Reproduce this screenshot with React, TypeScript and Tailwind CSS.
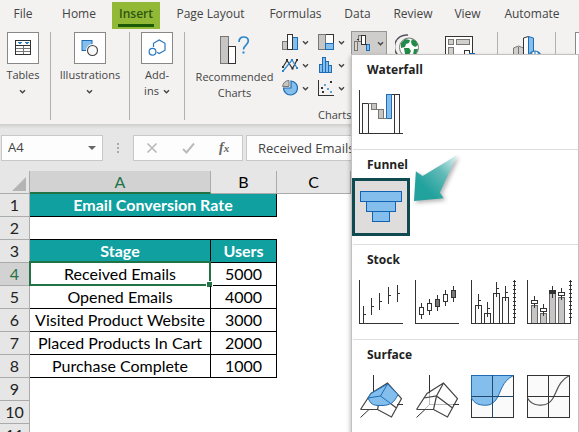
import type { ReactNode } from "react";

const tabs = [
  { name: "File", width: "w-[46px]" },
  { name: "Home", width: "w-[66px]" },
  { name: "Insert", width: "w-12" },
  { name: "Page Layout", width: "w-[101px]" },
  { name: "Formulas", width: "w-[69px]" },
  { name: "Data", width: "w-[55px]" },
  { name: "Review", width: "w-14" },
  { name: "View", width: "w-[53px]" },
  { name: "Automate", width: "w-[76px]" },
];

const stages = [
  ["Received Emails", "5000"],
  ["Opened Emails", "4000"],
  ["Visited Product Website", "3000"],
  ["Placed Products In Cart", "2000"],
  ["Purchase Complete", "1000"],
];

function Chevron() {
  return (
    <svg className="size-[7px] shrink-0" viewBox="0 0 7 7" fill="none" stroke="#444" strokeWidth="1.4" aria-hidden="true">
      <path d="M1 2.2 3.5 4.7 6 2.2" />
    </svg>
  );
}

function RibbonGroup({ width, children }: { width: string; children: ReactNode }) {
  return <div className={`h-[88px] shrink-0 border-r border-[#b3b0ad] ${width}`}>{children}</div>;
}

function LargeButton({ icon, lines, inlineArrow }: { icon: ReactNode; lines: string[]; inlineArrow?: boolean }) {
  return (
    <button type="button" className="flex w-full flex-col items-center">
      <span className="flex size-8 items-center justify-center border border-[#8a8886] bg-white">{icon}</span>
      <span className="mt-[3px] flex flex-col items-center leading-4">
        {lines.map((line, i) => (
          <span key={line} className="flex items-center gap-1">
            {line}
            {inlineArrow && i === lines.length - 1 && <Chevron />}
          </span>
        ))}
        {!inlineArrow && (
          <span className="flex h-4 items-center">
            <Chevron />
          </span>
        )}
      </span>
    </button>
  );
}

function TablesIcon() {
  return (
    <svg className="size-4" viewBox="0 0 16 16" fill="none" shapeRendering="crispEdges" aria-hidden="true">
      <path d="M1 8.5h14M1 11.5h14M8 6v9" stroke="#777" />
      <rect x="0.5" y="0.5" width="15" height="14" stroke="#333" />
      <path d="M1 5.5h14" stroke="#333" />
      <path d="M2 2h5L4.500 4.500zM9 2h5l-2.500 2.500z" fill="#2b7cc0" />
    </svg>
  );
}

function ShapesIcon() {
  return (
    <svg className="h-[18px] w-[18px]" viewBox="0 0 18 18" aria-hidden="true">
      <rect x="1" y="1.500" width="10" height="10" fill="#83beec" stroke="#1e6cb3" />
      <circle cx="11.500" cy="11.500" r="6.500" fill="#fff" />
      <circle cx="11.500" cy="11.500" r="5" fill="#fafafa" stroke="#444" strokeWidth="1.100" />
    </svg>
  );
}

function AddInsIcon() {
  return (
    <svg className="h-[18px] w-[18px]" viewBox="0 0 18 18" fill="none" stroke="#2a78bd" strokeWidth="1.200" aria-hidden="true">
      <path d="M5.500 8V4.300L11.200 1l5.800 3.300v6.900l-5.800 3.300-2.200-1.200" />
      <circle cx="4.500" cy="12.800" r="3.400" />
    </svg>
  );
}

function RecommendedIcon() {
  return (
    <svg className="h-7 w-[30px]" viewBox="0 0 30 28" aria-hidden="true">
      <g shapeRendering="crispEdges">
        <rect x="0.500" y="0.500" width="8" height="27" fill="#c8c6c4" stroke="#797774" />
        <rect x="8.500" y="10.500" width="7" height="17" fill="#fff" stroke="#333" />
      </g>
      <path d="M19 6c0-3.200 1.700-5 4.700-5s4.600 1.600 4.600 4.100c0 4-4.800 4-4.800 8.400" fill="none" stroke="#2a87cc" strokeWidth="1.700" />
      <rect x="22.500" y="15.500" width="2" height="2" fill="#2a87cc" />
    </svg>
  );
}

const chartIcons: { label: string; art: ReactNode }[] = [
  {
    label: "Insert Column or Bar Chart",
    art: (
      <g shapeRendering="crispEdges">
        <rect x="0.500" y="7.500" width="5" height="8" fill="#c8c6c4" stroke="#797774" />
        <rect x="10.500" y="3.500" width="5" height="12" fill="#83beec" stroke="#1e6cb3" />
        <rect x="5.500" y="0.500" width="5" height="15" fill="#fff" stroke="#333" />
      </g>
    ),
  },
  {
    label: "Insert Hierarchy Chart",
    art: (
      <g shapeRendering="crispEdges">
        <rect x="7.500" y="0.500" width="8" height="9" fill="#fff" stroke="#333" />
        <rect x="0.500" y="0.500" width="7" height="15" fill="#c8c6c4" stroke="#797774" />
        <rect x="7.500" y="9.500" width="8" height="6" fill="#83beec" stroke="#1e6cb3" />
      </g>
    ),
  },
  {
    label: "Insert Line or Area Chart",
    art: (
      <g fill="none" strokeWidth="1.200">
        <path d="M1 10 5 3.500 10.500 11.500 15 3" stroke="#333" />
        <path d="M1 14 10 3 15 11" stroke="#2a87cc" />
        <path d="M0 9h2v2H0zM4 2h2v2H4zM9.500 10.500h2v2h-2zM14 2h2v2h-2z" fill="#333" />
        <path d="M0 13h2v2H0zM9 2h2v2H9zM14 10h2v2h-2z" fill="#2a87cc" />
      </g>
    ),
  },
  {
    label: "Insert Statistic Chart",
    art: (
      <g fill="#83beec" stroke="#1e6cb3" shapeRendering="crispEdges">
        <rect x="1.500" y="7.500" width="3" height="8" />
        <rect x="4.500" y="0.500" width="3" height="15" />
        <rect x="7.500" y="4.500" width="3" height="11" />
        <rect x="10.500" y="8.500" width="3" height="7" />
      </g>
    ),
  },
  {
    label: "Insert Pie or Doughnut Chart",
    art: (
      <g>
        <path d="M9 1a7 7 0 1 1-7.500 7H9z" fill="#83beec" stroke="#1e6cb3" strokeWidth="1.200" />
        <path d="M7 6.500H.6A6.300 6.300 0 0 1 7 .5z" fill="#c8c6c4" stroke="#797774" />
      </g>
    ),
  },
  {
    label: "Insert Scatter or Bubble Chart",
    art: (
      <g shapeRendering="crispEdges">
        <path d="M0.500 0v15.500H16" fill="none" stroke="#333" />
        <path d="M3 7h2v2H3zM12 1h2v2h-2zM4 11h2v2H4z" fill="#333" />
        <path d="M6 4h2v2H6zM9 8h2v2H9zM12 11h2v2h-2z" fill="#5ba5dc" />
      </g>
    ),
  },
];

function GlobeIcon() {
  return (
    <svg className="size-7" viewBox="0 0 28 28" aria-hidden="true">
      <path d="M13 1A12 12 0 0 0 5 23" fill="none" stroke="#54515c" strokeWidth="1.500" />
      <circle cx="14" cy="13.500" r="9.500" fill="#fff" stroke="#777" />
      <path d="M6 9l4-4 5 1-1 3-3 1-1 3-4 1zM17 5l4 2 2 4-3 2-3-2-1-3zM9 14l5 0 2 3-3 6-3-3zM19 15l4 0-2 5-3 1z" fill="#238a4a" />
    </svg>
  );
}

function PivotChartIcon() {
  return (
    <svg className="h-7 w-[30px]" viewBox="0 0 30 28" shapeRendering="crispEdges" aria-hidden="true">
      <rect x="0.500" y="0.500" width="27" height="27" fill="#fff" stroke="#333" />
      <rect x="3.500" y="3.500" width="5" height="5" fill="#d2d0ce" stroke="#797774" />
      <rect x="11.500" y="3.500" width="13" height="5" fill="#d2d0ce" stroke="#797774" />
      <rect x="3.500" y="11.500" width="5" height="13" fill="#d2d0ce" stroke="#797774" />
      <rect x="19.500" y="14.500" width="5" height="13" fill="#fff" stroke="#333" />
      <path d="M24.500 17.500h5v10h-5z" fill="#83beec" stroke="#1e6cb3" />
    </svg>
  );
}

function MapIcon() {
  return (
    <svg className="h-7 w-7" viewBox="0 0 28 28" aria-hidden="true">
      <path d="M.5 28V12l5-2 5 2v16" fill="#d2d0ce" stroke="#797774" />
      <path d="M5.500 11v17" stroke="#797774" />
      <path d="M10.500 28V2l5-1.500V28" fill="#fff" stroke="#333" />
      <path d="M15.500 28V.5l5 1.500v26z" fill="#83beec" stroke="#1e6cb3" />
      <circle cx="22" cy="21" r="6" fill="#fff" stroke="#2a78bd" strokeWidth="1.200" />
      <path d="M16 20h12M22 15v12M19 16c-1 4-1 7 0 10M25 16c1 4 1 7 0 10" fill="none" stroke="#2a78bd" />
    </svg>
  );
}

function WaterfallButtonIcon() {
  return (
    <svg className="h-[17px] w-[17px]" viewBox="0 0 17 17" shapeRendering="crispEdges" aria-hidden="true">
      <g fill="#d8d6d4" stroke="#797774">
        <rect x="0.500" y="6.500" width="3" height="9" />
        <rect x="4.500" y="0.500" width="3" height="6" />
      </g>
      <path d="M7.500 9.500v-9h4v9z" fill="#fff" stroke="#333" />
      <rect x="12.500" y="9.500" width="3" height="6" fill="#83beec" stroke="#1e6cb3" />
      <path d="M3 4.500h2M11 9.500h2" stroke="#333" />
    </svg>
  );
}

const ink = "#333";
const axes = <path d="M0.500 0v43.500H44" fill="none" stroke={ink} shapeRendering="crispEdges" />;

const waterfall = (
  <g shapeRendering="crispEdges">
    <rect x="3.500" y="13.500" width="6" height="30" fill="#fafafa" stroke={ink} />
    <rect x="12.500" y="13.500" width="5" height="6" fill="#c8c6c4" stroke="#797774" />
    <rect x="19.500" y="19.500" width="5" height="9" fill="#c8c6c4" stroke="#797774" />
    <rect x="35.500" y="4.500" width="5" height="39" fill="#fafafa" stroke={ink} />
    <rect x="27.500" y="4.500" width="5" height="24" fill="#83beec" stroke="#1e6cb3" />
    <path d="M9 13.500h4M17 19.500h3M24 28.500h4" stroke="#797774" />
    <path d="M33 4.500h3" stroke={ink} />
    {axes}
  </g>
);

const funnel = (
  <g fill="#83beec" stroke="#1262b3" shapeRendering="crispEdges">
    <rect x="1.500" y="6.500" width="41" height="10" />
    <rect x="7.500" y="16.500" width="29" height="10" />
    <rect x="13.500" y="26.500" width="17" height="10" />
  </g>
);

const highLowClose = (
  <g stroke={ink} shapeRendering="crispEdges">
    <path d="M4.500 26v17M12.500 18v17M20.500 13v17M29.500 7v17M38.500 5v17" />
    <path d="M5 34.500h2M13 26.500h2M21 21.500h2M30 15.500h2M39 13.500h2" />
    {axes}
  </g>
);

const openHighLowClose = (
  <g stroke={ink} shapeRendering="crispEdges">
    <path d="M6.500 23v16M14.500 19v16M22.500 15v16M30.500 10v16M38.500 6v16" />
    <path d="M4.500 27.500h4v7h-4zM12.500 23.500h4v7h-4zM28.500 14.500h4v7h-4z" fill="#fff" />
    <path d="M20.500 19.500h4v7h-4zM36.500 10.500h4v7h-4z" fill="#777" />
    {axes}
  </g>
);

const secondAxis = <path d="M43.500 0v44M42 1.500h3M42 5.500h3M42 9.500h3M42 13.500h3M42 17.500h3M42 21.500h3M42 25.500h3M42 29.500h3M42 33.500h3M42 37.500h3" />;

const volumeHighLow = (
  <g stroke={ink} shapeRendering="crispEdges">
    <path d="M4.500 25.500h6v18h-6zM13.500 33.500h6v10h-6zM22.500 13.500h6v30h-6zM31.500 17.500h6v26h-6z" fill="#fafafa" />
    <path d="M7.500 14v15M16.500 22v15M25.500 2v15M34.500 6v15M8 20.500h2M17 28.500h2M26 8.500h2M35 12.500h2" />
    {secondAxis}
    {axes}
  </g>
);

const volumeOpenHighLow = (
  <g stroke={ink} shapeRendering="crispEdges">
    <path d="M4.500 25.500h6v18h-6zM13.500 33.500h6v10h-6zM22.500 13.500h6v30h-6zM31.500 17.500h6v26h-6z" fill="#c8c6c4" stroke="#666" />
    <path d="M7.500 16v12M16.500 24v12M25.500 6v12M34.500 8v12" />
    <path d="M4.500 20.500h6v3h-6zM13.500 28.500h6v3h-6zM31.500 12.500h6v3h-6z" fill="#fff" />
    <path d="M22.500 10.500h6v3h-6z" fill={ink} />
    {secondAxis}
    {axes}
  </g>
);

const wire = (
  <path
    d="M1.500 34.500H18.500M1.500 34.500 12 18.500 28.500 8 42.500 23.500 32.500 42 18.500 34.500 21.500 21 28.500 8M9 23 21.500 21 37.500 33M12 18.500 9 23"
    fill="none"
    stroke="#444"
    strokeWidth="1.200"
  />
);

const surface3d = (
  <g>
    <path d="M14.500 0v18M38 29.500h6M1.500 42.500 10 34.500" fill="none" stroke={ink} />
    {wire}
    <path d="M9 23 12 18.500 28.500 9 39 19.500C35 28 31 30.500 22 30.500S12 29 9 23z" fill="#83beec" stroke="#1e6cb3" />
    <path d="M28.500 9 21.500 21 9 23M21.500 21 31 28" fill="none" stroke="#1e6cb3" />
  </g>
);

const surfaceWire = (
  <g>
    <path d="M14.500 18v12M14 29.500h24M14 30 10 34" fill="none" stroke="#bbb" />
    <path d="M14.500 0v18M38 29.500h6M1.500 42.500 10 34.500" fill="none" stroke={ink} />
    {wire}
  </g>
);

const contour = (
  <g>
    <rect x="0.500" y="0.500" width="42" height="42" fill="#fafafa" stroke={ink} />
    <path d="M.5.5H42.500C31 6 30 17 25.500 24S15 30.500 11 30 3 28 .5 23z" fill="#83beec" stroke="#1e6cb3" />
    <path d="M0 21.500h43M21.500 0v43" stroke="#22496b" />
  </g>
);

const contourWire = (
  <g>
    <rect x="0.500" y="0.500" width="42" height="42" fill="#fafafa" stroke={ink} />
    <path d="M42.500.5C31 6 30 17 25.500 24S15 30.500 11 30 3 28 .5 23" fill="none" stroke="#555" strokeWidth="1.200" />
    <path d="M0 21.500h43M21.500 0v43" stroke={ink} />
  </g>
);

const sections: { title: string; selected?: boolean; charts: { label: string; art: ReactNode }[] }[] = [
  { title: "Waterfall", charts: [{ label: "Waterfall", art: waterfall }] },
  { title: "Funnel", selected: true, charts: [{ label: "Funnel", art: funnel }] },
  {
    title: "Stock",
    charts: [
      { label: "High-Low-Close", art: highLowClose },
      { label: "Open-High-Low-Close", art: openHighLowClose },
      { label: "Volume-High-Low-Close", art: volumeHighLow },
      { label: "Volume-Open-High-Low-Close", art: volumeOpenHighLow },
    ],
  },
  {
    title: "Surface",
    charts: [
      { label: "3-D Surface", art: surface3d },
      { label: "Wireframe 3-D Surface", art: surfaceWire },
      { label: "Contour", art: contour },
      { label: "Wireframe Contour", art: contourWire },
    ],
  },
];

function Pointer() {
  return (
    <svg className="pointer-events-none absolute top-1 left-[60px] h-12 w-12 drop-shadow-[2px_2px_2px_rgba(0,0,0,0.3)]" viewBox="0 0 48 50" aria-hidden="true">
      <defs>
        <linearGradient id="pointer-fill" x1="1" y1="0" x2="0.3" y2="0.75">
          <stop offset="0" stopColor="#e4f4f3" />
          <stop offset="0.5" stopColor="#62bab7" />
          <stop offset="1" stopColor="#22a29d" />
        </linearGradient>
      </defs>
      <path d="M45 1 9 23 2 18 0 49 31 46 27 40z" fill="url(#pointer-fill)" />
    </svg>
  );
}

function ChartMenu() {
  return (
    <div className="absolute top-full left-0 z-10 w-[228px] border border-[#c3c1bf] bg-white pb-3 pl-px shadow-[-1px_2px_4px_rgba(0,0,0,0.25)]">
      {sections.map((section) => (
        <section key={section.title} className="relative h-[95px] border-b border-[#dedede] last:border-b-0">
          <h2 className="flex h-[29px] items-center pl-3.5 text-xs font-bold text-[#222]">{section.title}</h2>
          <div className="flex">
            {section.charts.map((chart) => (
              <button
                key={chart.label}
                type="button"
                aria-label={chart.label}
                className={`flex size-14 items-center justify-center ${section.selected ? "bg-[#dedddc] ring-2 ring-[#0e4a50] ring-inset outline outline-[#0e4a50]" : ""}`}
              >
                <svg className="size-11 overflow-visible" viewBox="0 0 44 44">
                  {chart.art}
                </svg>
              </button>
            ))}
          </div>
          {section.selected && <Pointer />}
        </section>
      ))}
    </div>
  );
}

function Ribbon() {
  return (
    <div className="flex items-start pt-0.5 pb-1 text-[11px] text-[#444]">
      <RibbonGroup width="w-[51px] pr-1">
        <LargeButton icon={<TablesIcon />} lines={["Tables"]} />
      </RibbonGroup>
      <RibbonGroup width="w-[79px]">
        <LargeButton icon={<ShapesIcon />} lines={["Illustrations"]} />
      </RibbonGroup>
      <RibbonGroup width="w-[55px]">
        <LargeButton icon={<AddInsIcon />} lines={["Add-", "ins"]} inlineArrow />
      </RibbonGroup>
      <RibbonGroup width="w-[313px]">
        <div className="flex items-start">
          <button type="button" className="mt-1 flex w-[97px] flex-col items-center pl-0.5 leading-4">
            <RecommendedIcon />
            <span className="mt-[5px]">Recommended</span>
            <span>Charts</span>
          </button>
          <div className="grid w-[69px] grid-cols-[36px_33px] gap-y-[7px] pt-0.5">
            {chartIcons.map((chart) => (
              <button key={chart.label} type="button" aria-label={chart.label} className="flex items-center gap-1">
                <svg className="size-4" viewBox="0 0 16 16">
                  {chart.art}
                </svg>
                <Chevron />
              </button>
            ))}
            <span className="col-span-2 pt-1 pl-9 leading-4">Charts</span>
          </div>
          <div className="relative -mt-px h-[23px] w-9">
            <button
              type="button"
              aria-label="Insert Waterfall, Funnel, Stock, Surface or Radar Chart"
              aria-expanded="true"
              className="flex h-6 w-9 items-center gap-1.5 border border-[#979593] bg-[#cfcdcb] pl-0.5"
            >
              <WaterfallButtonIcon />
              <Chevron />
            </button>
            <ChartMenu />
          </div>
          <button type="button" aria-label="Maps" className="mt-0.5 ml-2">
            <GlobeIcon />
          </button>
          <button type="button" aria-label="PivotChart" className="mt-1 ml-[22px]">
            <PivotChartIcon />
          </button>
        </div>
      </RibbonGroup>
      <RibbonGroup width="w-[58px] pt-1 pl-[15px]">
        <button type="button" aria-label="3D Map">
          <MapIcon />
        </button>
      </RibbonGroup>
      <div className="ml-[19px] size-8 shrink-0 border border-[#8a8886] bg-white" />
    </div>
  );
}

function FormulaBar() {
  return (
    <div className="flex h-[47px] items-center bg-linear-to-b from-[#cfcecd] from-0% to-[#e6e6e6] to-10% pl-px text-[#444]">
      <div className="flex h-[26px] w-[102px] shrink-0 items-center border border-[#c8c8c8] bg-[#fdfdfd]">
        <input aria-label="Name box" defaultValue="A4" className="w-20 min-w-0 pl-1.5 text-[13px] outline-none" />
        <button type="button" aria-label="Open name list" className="pl-1.5">
          <svg className="h-1 w-2" viewBox="0 0 8 4" aria-hidden="true">
            <path d="M0 0h8L4 4z" fill="#666" />
          </svg>
        </button>
      </div>
      <div className="flex w-[30px] shrink-0 flex-col items-center gap-0.5">
        <span className="size-0.5 bg-[#aaa]" />
        <span className="size-0.5 bg-[#aaa]" />
        <span className="size-0.5 bg-[#aaa]" />
      </div>
      <div className="flex h-[26px] w-[110px] shrink-0 items-center border border-[#c8c8c8] bg-[#fdfdfd] pl-3">
        <button type="button" aria-label="Cancel">
          <svg className="size-3" viewBox="0 0 12 12" stroke="#bbb" strokeWidth="1.700" aria-hidden="true">
            <path d="m1.500 1.500 9 9m0-9-9 9" />
          </svg>
        </button>
        <button type="button" aria-label="Enter" className="ml-6">
          <svg className="h-3 w-[13px]" viewBox="0 0 13 12" fill="none" stroke="#bbb" strokeWidth="2" aria-hidden="true">
            <path d="m1 7 3.500 3.500L12 1.500" />
          </svg>
        </button>
        <button type="button" aria-label="Insert function" className="ml-6 font-['Liberation_Serif'] text-sm leading-4 font-bold text-[#666] italic">
          f<span className="text-[11px]">x</span>
        </button>
      </div>
      <input
        aria-label="Formula"
        defaultValue="Received Emails"
        className="ml-[3px] h-[26px] min-w-0 grow border border-[#c8c8c8] bg-[#fdfdfd] pl-[11px] text-[13px] outline-none"
      />
    </div>
  );
}

function RowHeader({ n, active }: { n: number; active?: boolean }) {
  return (
    <th
      scope="row"
      className={`border-r border-b border-[#ababab] p-0 text-center font-normal ${
        active ? "bg-[#d2d2d2] text-[#217346]" : "bg-[#e6e6e6] text-[#222]"
      }`}
    >
      {n}
    </th>
  );
}

const filled = "border-r border-b border-black bg-[#0fa09f] p-0 text-center font-bold text-white";
const plain = "border-r border-b border-black p-0 text-center";

function Sheet() {
  return (
    <table className="w-full table-fixed border-separate border-spacing-0 bg-white font-['Lato',sans-serif] text-base leading-[22px] text-black">
      <colgroup>
        <col className="w-[30px]" />
        <col className="w-[181px]" />
        <col className="w-[66px]" />
        <col className="w-[74px]" />
        <col />
      </colgroup>
      <thead>
        <tr className="h-[23px] bg-[#e6e6e6]">
          <td className="border-r border-b border-[#ababab] p-0">
            <svg className="mt-1 ml-3 size-3.5" viewBox="0 0 14 14" aria-hidden="true">
              <path d="M14 0v14H0z" fill="#b4b4b4" />
            </svg>
          </td>
          <th scope="col" className="border-r border-b-2 border-r-[#ababab] border-b-[#217346] bg-[#d2d2d2] p-0 leading-[21px] font-normal text-[#217346]">A</th>
          <th scope="col" className="border-r border-b border-[#ababab] p-0 font-normal">B</th>
          <th scope="col" className="border-r border-b border-[#ababab] p-0 font-normal">C</th>
          <th scope="col" aria-label="D" className="border-r border-b border-[#ababab] p-0 font-normal" />
        </tr>
      </thead>
      <tbody>
        <tr className="h-[23px]">
          <RowHeader n={1} />
          <td colSpan={2} className={filled}>Email Conversion Rate</td>
        </tr>
        <tr className="h-[23px]">
          <RowHeader n={2} />
          <td className="border-b border-black p-0" />
          <td className="border-b border-black p-0" />
        </tr>
        <tr className="h-[23px]">
          <RowHeader n={3} />
          <td className={filled}>Stage</td>
          <td className={filled}>Users</td>
        </tr>
        {stages.map(([stage, users], i) => (
          <tr key={stage} className="h-[23px]">
            <RowHeader n={i + 4} active={i === 0} />
            <td className={`relative whitespace-nowrap ${plain}`}>
              {stage}
              {i === 0 && (
                <span className="absolute -inset-x-px -top-0.5 -bottom-px border-2 border-[#217346]">
                  <span className="absolute -right-[3px] -bottom-[3px] size-[5px] bg-[#217346] outline outline-white" />
                </span>
              )}
            </td>
            <td className={plain}>{users}</td>
          </tr>
        ))}
        {[9, 10, 11].map((n) => (
          <tr key={n} className="h-[23px]">
            <RowHeader n={n} />
          </tr>
        ))}
      </tbody>
    </table>
  );
}

export default function App() {
  return (
    <main className="h-screen overflow-hidden bg-white font-['Open_Sans',sans-serif]">
      <div className="h-[124px] bg-[#f3f2f1]">
        <nav className="flex h-[30px] items-start pt-0.5 text-xs text-[#444]" aria-label="Ribbon tabs">
          {tabs.map(({ name, width }) => (
            <button
              key={name}
              type="button"
              className={`flex h-[27px] shrink-0 flex-col items-center whitespace-nowrap ${width} ${name === "Insert" ? "bg-[#92b935] font-semibold text-[#2c5613]" : ""}`}
            >
              <span className="pt-0.5 leading-5">{name}</span>
              {name === "Insert" && <span className="h-[3px] w-9 bg-[#1c5c06]" />}
            </button>
          ))}
        </nav>
        <Ribbon />
      </div>
      <FormulaBar />
      <Sheet />
    </main>
  );
}
